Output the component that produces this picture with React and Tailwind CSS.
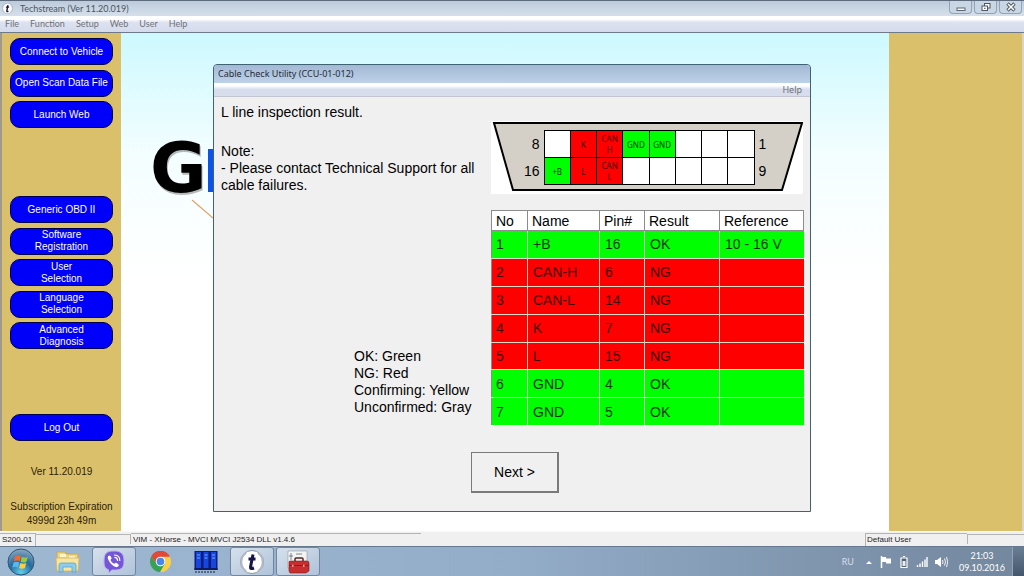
import React from "react";

const topActions = ["Connect to Vehicle", "Open Scan Data File", "Launch Web"];
const setupActions = [
  ["Generic OBD II"],
  ["Software", "Registration"],
  ["User", "Selection"],
  ["Language", "Selection"],
  ["Advanced", "Diagnosis"],
];

const pins = [
  { color: "bg-white" },
  { label: ["K"], color: "bg-[#ff0000]" },
  { label: ["CAN", "H"], color: "bg-[#ff0000]" },
  { label: ["GND"], color: "bg-[#00ff00]" },
  { label: ["GND"], color: "bg-[#00ff00]" },
  { color: "bg-white" },
  { color: "bg-white" },
  { color: "bg-white" },
  { label: ["+B"], color: "bg-[#00ff00]" },
  { label: ["L"], color: "bg-[#ff0000]" },
  { label: ["CAN", "L"], color: "bg-[#ff0000]" },
  { color: "bg-white" },
  { color: "bg-white" },
  { color: "bg-white" },
  { color: "bg-white" },
  { color: "bg-white" },
];

const results = [
  { no: 1, name: "+B", pin: 16, result: "OK", reference: "10 - 16 V" },
  { no: 2, name: "CAN-H", pin: 6, result: "NG" },
  { no: 3, name: "CAN-L", pin: 14, result: "NG" },
  { no: 4, name: "K", pin: 7, result: "NG" },
  { no: 5, name: "L", pin: 15, result: "NG" },
  { no: 6, name: "GND", pin: 4, result: "OK" },
  { no: 7, name: "GND", pin: 5, result: "OK" },
];

function TechstreamIcon({ className }) {
  return (
    <svg viewBox="0 0 24 24" className={className} aria-hidden="true">
      <circle cx="12" cy="12" r="11.5" fill="#fff" stroke="#8793a5" strokeWidth="1" />
      <path d="M6 3a11 11 0 0 0 0 18M18 3a11 11 0 0 1 0 18" fill="none" stroke="#b4bac6" strokeWidth="2" />
      <path d="M13 4.500 10.500 17q-.4 2.500 3.500 1M8.500 9h7" fill="none" stroke="#15154a" strokeWidth="3" />
    </svg>
  );
}

function TitleBar() {
  return (
    <header className="flex h-4 items-center justify-between border-t border-[#5d6b7c] bg-linear-to-b from-[#bccbdb] to-[#d5e0eb] pl-[2px]">
      <div className="flex items-center gap-[7px]">
        <TechstreamIcon className="size-[11px]" />
        <h1 className="text-[9px] leading-3 text-[#4b545f]">Techstream (Ver 11.20.019)</h1>
      </div>
      <div className="flex gap-[2px] self-start pr-[2px]">
        <button type="button" aria-label="Minimize" className="flex h-[13px] w-[23px] items-center justify-center rounded-b-sm border border-t-0 border-[#94a3b5] bg-[#c9d6e3]">
          <svg viewBox="0 0 10 10" className="size-[10px]">
            <rect x="1" y="6" width="8" height="2.500" fill="#fff" stroke="#5d6774" />
          </svg>
        </button>
        <button type="button" aria-label="Restore" className="flex h-[13px] w-[23px] items-center justify-center rounded-b-sm border border-t-0 border-[#94a3b5] bg-[#c9d6e3]">
          <svg viewBox="0 0 10 10" className="size-[10px]">
            <rect x="3.500" y="1.500" width="5.500" height="4.500" fill="#fff" stroke="#4d5764" />
            <rect x="1" y="4" width="5.500" height="4.500" fill="#fff" stroke="#4d5764" />
            <path d="M3 6.300h1.600" stroke="#4d5764" />
          </svg>
        </button>
        <button type="button" aria-label="Close" className="flex h-[13px] w-[23px] items-center justify-center rounded-b-sm border border-t-0 border-[#94a3b5] bg-[#c9d6e3]">
          <svg viewBox="0 0 10 10" className="size-[10px]">
            <path d="m1.500 1.500 7 7m0-7-7 7" stroke="#4d5764" strokeWidth="3.400" />
            <path d="m2 2 6 6m0-6-6 6" stroke="#fff" strokeWidth="1.500" />
          </svg>
        </button>
      </div>
    </header>
  );
}

function MenuBar() {
  return (
    <nav className="flex h-[17px] items-center gap-[11px] border-b border-[#6f7a88] bg-linear-to-b from-white from-20% via-[#dde2f0] via-40% to-[#d5dbec] pl-[5px] text-[9px] leading-3 text-[#6f7278]">
      {["File", "Function", "Setup", "Web", "User", "Help"].map((item) => (
        <button key={item} type="button">
          {item}
        </button>
      ))}
    </nav>
  );
}

function SideButton({ lines }) {
  return (
    <button
      type="button"
      className="flex h-[27px] w-full flex-col items-center justify-center rounded-[10px] border border-[#000050] bg-[#0000fa] text-[10px] leading-3 whitespace-nowrap text-white"
    >
      {lines.map((line) => (
        <span key={line}>{line}</span>
      ))}
    </button>
  );
}

function Sidebar() {
  return (
    <aside className="flex w-[121px] shrink-0 flex-col border-l-2 border-[#a09a8c] bg-[#dbc06c] pt-[5px] pr-2 pl-2 font-['Liberation_Sans',Arial,sans-serif]">
      <div className="flex h-[90px] flex-col justify-between">
        {topActions.map((label) => (
          <SideButton key={label} lines={[label]} />
        ))}
      </div>
      <div className="mt-[68px] flex h-[153px] flex-col justify-between">
        {setupActions.map((lines) => (
          <SideButton key={lines.join(" ")} lines={lines} />
        ))}
      </div>
      <div className="mt-[65px]">
        <SideButton lines={["Log Out"]} />
      </div>
      <div className="mt-6 text-center text-[10px] leading-[14px] whitespace-nowrap text-[#2b2005]">
        <p>Ver 11.20.019</p>
        <p className="mt-[21px]">Subscription Expiration</p>
        <p>4999d 23h 49m</p>
      </div>
    </aside>
  );
}

function Backdrop() {
  return (
    <div className="flex-1 bg-linear-to-b from-[#ccf9ff] via-[#f4feff] via-25% to-white to-50%">
      <svg viewBox="0 0 92 200" className="h-[200px] w-[92px]" aria-hidden="true">
        <text x="30" y="161" fontFamily="DejaVu Sans" fontWeight="bold" fontSize="69" fill="#777" opacity="0.5">
          G
        </text>
        <text x="29" y="159" fontFamily="DejaVu Sans" fontWeight="bold" fontSize="69" fill="#000">
          G
        </text>
        <rect x="87" y="116" width="5" height="43" fill="#0a54ee" />
        <path d="m71 167 21 18" stroke="#e0a468" strokeWidth="1.200" />
      </svg>
    </div>
  );
}

function Connector() {
  return (
    <figure className="relative flex h-[73px] items-center justify-center gap-1 bg-white text-[14px] leading-[27px]">
      <svg viewBox="0 0 312 73" className="absolute inset-0 size-full" preserveAspectRatio="none" aria-hidden="true">
        <path d="M3 2h308L291 69H22Z" fill="#d4d0c8" stroke="#000" strokeWidth="2" />
      </svg>
      <div className="relative w-5 text-right">
        <p>8</p>
        <p>16</p>
      </div>
      <div className="relative grid w-[211px] grid-cols-8 gap-px border border-black bg-black">
        {pins.map((pin, i) => (
          <div
            key={i}
            className={`flex h-[26px] flex-col items-center justify-center font-['Noto_Sans',sans-serif] text-[8px] leading-[11px] ${pin.color} ${pin.color === "bg-[#00ff00]" ? "text-[#043804]" : "text-[#400000]"}`}
          >
            {pin.label?.map((line) => (
              <span key={line}>{line}</span>
            ))}
          </div>
        ))}
      </div>
      <div className="relative w-4">
        <p>1</p>
        <p>9</p>
      </div>
    </figure>
  );
}

function ResultTable() {
  return (
    <table className="h-[215px] w-full table-fixed border-collapse border-l border-[#8c8c8c] text-left text-[14px] leading-4">
      <colgroup>
        <col className="w-[36px]" />
        <col className="w-[72px]" />
        <col className="w-[45px]" />
        <col className="w-[75px]" />
        <col className="w-[84px]" />
      </colgroup>
      <thead>
        <tr className="h-[20px] bg-white">
          {["No", "Name", "Pin#", "Result", "Reference"].map((head) => (
            <th key={head} scope="col" className="border border-[#8c8c8c] px-1 font-normal">
              {head}
            </th>
          ))}
        </tr>
      </thead>
      <tbody>
        {results.map((row) => (
          <tr key={row.no} className={row.result === "OK" ? "bg-[#00ff00] text-[#043804]" : "bg-[#ff0000] text-[#3c0000]"}>
            <td className="border-t border-r border-[#d9d9c8] px-1">{row.no}</td>
            <td className="border-t border-r border-[#d9d9c8] px-[5px]">{row.name}</td>
            <td className="border-t border-r border-[#d9d9c8] px-[5px]">{row.pin}</td>
            <td className="border-t border-r border-[#d9d9c8] px-[5px]">{row.result}</td>
            <td className="border-t border-[#d9d9c8] px-[5px]">{row.reference}</td>
          </tr>
        ))}
      </tbody>
    </table>
  );
}

function CableCheckDialog() {
  return (
    <section
      role="dialog"
      aria-labelledby="dialog-title"
      className="absolute inset-x-0 top-[31px] mx-auto w-[598px] rounded-t-[4px] border border-[#3f6373] bg-[#f0f0f0] font-['Liberation_Sans',Arial,sans-serif] text-black"
    >
      <div className="flex h-[18px] items-center rounded-t-[3px] bg-linear-to-b from-[#a3b9d3] to-[#bdd1e9] pl-1 font-['Noto_Sans',sans-serif]">
        <h2 id="dialog-title" className="text-[9px] leading-3 text-[#1f2c3c]">
          Cable Check Utility (CCU-01-012)
        </h2>
      </div>
      <div className="flex h-[14px] items-center justify-end border-b border-[#c3c6d0] bg-linear-to-b from-white from-20% to-[#d8ddee] to-50% pr-2 font-['Noto_Sans',sans-serif] text-[9px] leading-3 text-[#6f7278]">
        <button type="button">Help</button>
      </div>
      <div className="flex justify-between pt-[7px] pr-[7px] pl-[7px]">
        <div className="flex flex-col text-[14px] leading-[17px] whitespace-nowrap">
          <p>L line inspection result.</p>
          <p className="mt-[22px]">Note:</p>
          <p>
            - Please contact Technical Support for all
            <br />
            cable failures.
          </p>
          <ul className="mt-[154px] pl-[133px]">
            <li>OK: Green</li>
            <li>NG: Red</li>
            <li>Confirming: Yellow</li>
            <li>Unconfirmed: Gray</li>
          </ul>
        </div>
        <div className="flex w-[312px] flex-col gap-4 pt-[17px]">
          <Connector />
          <ResultTable />
        </div>
      </div>
      <div className="flex pt-[27px] pb-[18px] pl-[257px]">
        <button
          type="button"
          className="h-[41px] w-[88px] border border-r-2 border-b-2 border-[#7a7a7a] bg-[#f0f0f0] text-[14px] leading-4"
        >
          Next &gt;
        </button>
      </div>
    </section>
  );
}

function StatusBar() {
  return (
    <footer className="flex h-[15px] items-center border-t border-[#f8f8f8] bg-[#f0f0f0] py-[2px] font-['Liberation_Sans',Arial,sans-serif] text-[8px] leading-3 whitespace-nowrap text-[#1c1c1c]">
      <p className="w-[36px] border-t border-r border-[#b4b4b4] pl-[2px]">S200-01</p>
      <p className="h-full w-[95px] border-t border-r border-[#b4b4b4]"></p>
      <p className="w-[290px] border-t border-[#b4b4b4] pl-[2px]">VIM - XHorse - MVCI MVCI J2534 DLL v1.4.6</p>
      <p className="ml-auto w-[102px] border-t border-l border-[#b4b4b4] pl-px">Default User</p>
      <p className="h-full w-[57px] border-t border-l border-[#b4b4b4]"></p>
    </footer>
  );
}

function WindowsLogo() {
  return (
    <svg viewBox="0 0 28 28" className="size-[28px]">
      <defs>
        <radialGradient id="orb" cx="50%" cy="90%" r="90%">
          <stop offset="0" stopColor="#5fd0ee" />
          <stop offset="0.5" stopColor="#256a9d" />
          <stop offset="1" stopColor="#8fa9c0" />
        </radialGradient>
      </defs>
      <circle cx="14" cy="14" r="13" fill="url(#orb)" stroke="#2c5577" />
      <path d="M8 8.500c2-1.400 4-1.200 5.800-.2l-1.200 5c-1.800-1-3.800-1-5.800.1Z" fill="#ee6a32" />
      <path d="M14.800 8.800c2 1 4 1 6-.1l-1.300 5c-2 1.200-4 1-5.900 0Z" fill="#9aca3c" />
      <path d="M6.500 14.500c2-1.200 4-1.100 5.800-.1l-1.200 5c-1.800-1-3.800-1.100-5.800.1Z" fill="#58b7ec" />
      <path d="M13.300 15c2 1 4 1.100 5.900 0l-1.300 5c-2 1.100-4 .9-5.800-.1Z" fill="#fccd3c" />
    </svg>
  );
}

function ExplorerIcon() {
  return (
    <svg viewBox="0 0 26 24" className="h-[24px] w-[26px]">
      <path d="M2 2h8l1 2h12v17H2Z" fill="#eed486" stroke="#cda950" />
      <path d="M5 4h6v3H5Zm9 2h6v3h-6Z" fill="#fff6c8" />
      <path d="M1 8h23l-1 13H2Z" fill="#f8e59e" stroke="#d6b860" strokeWidth="0.800" />
      <path d="M4 22v-7q0-2 2-2h13q2 0 2 2v7h-4v-5H8v5Z" fill="#8ecbed" stroke="#5ca6d1" strokeWidth="0.800" />
    </svg>
  );
}

function ViberIcon() {
  return (
    <svg viewBox="0 0 24 24" className="size-[24px]">
      <path d="M12 1C5 1 2 3 2 11c0 5 1 7.500 4.500 8.700V23l3.500-3c9 .5 12-1.500 12-9S19 1 12 1Z" fill="#7357d8" stroke="#bdb1f0" />
      <path d="M7.200 5.500c-2 1-1.800 2.500-.5 5 1.700 3.300 4 5.300 7 6.500 1.500.5 2.600-.3 3.200-1.700.2-.7-2.200-2.600-3-2.600-.7 0-1 1.200-1.800 1-1.700-.6-3-2-3.500-3.600-.2-.8 1-1 1-1.800 0-.9-1.500-2.900-2.400-2.800Z" fill="#fff" />
      <path d="M12.500 5c3.300.2 5.300 2.300 5.300 5.500M12.800 7.400c1.800.2 2.700 1.200 2.800 3" fill="none" stroke="#fff" strokeWidth="1.200" strokeLinecap="round" />
    </svg>
  );
}

function ChromeIcon() {
  return (
    <svg viewBox="0 0 24 24" className="size-[23px]">
      <path d="M12 12 2.470 6.500A11 11 0 0 1 21.530 6.500Z" fill="#df4a3a" />
      <path d="M12 1A11 11 0 0 0 2.470 6.500L7.670 14.500 12 7h9.800A11 11 0 0 0 12 1Z" fill="#df4a3a" />
      <path d="M21.800 7H12l4.330 7.500L11.500 23A11 11 0 0 0 21.800 7Z" fill="#fbd046" />
      <path d="M2.470 6.500A11 11 0 0 0 11.500 23l4.830-8.500H7.670Z" fill="#35a353" />
      <circle cx="12" cy="12" r="5" fill="#fff" />
      <circle cx="12" cy="12" r="4" fill="#4788ed" />
    </svg>
  );
}

function ServerIcon() {
  return (
    <svg viewBox="0 0 24 24" className="size-[24px]">
      <rect x="0.500" y="1" width="23" height="19" fill="#0a1d7d" />
      <path d="M2 2h5v16H2Zm7.500 0h5v16h-5ZM17 2h5v16h-5Z" fill="#1746df" />
      <path d="M3 5h3m-3 3h3m4.500-3h3m-3 3h3m4.500-3h3m-3 3h3" stroke="#6da9ff" />
      <path d="M0 19h24M2 21v2m3-2v2m3-2v2m3-2v2m3-2v2m3-2v2m3-2v2" stroke="#101d46" />
    </svg>
  );
}

function ToolboxIcon() {
  return (
    <svg viewBox="0 0 24 24" className="size-[24px]">
      <path d="M2 1h19v17H2Z" fill="#f4f4f4" stroke="#92979f" strokeWidth="0.600" />
      <path d="M5 3v7M3 6h4M10 4h6" stroke="#606872" strokeWidth="0.800" />
      <path d="M9 12V9q0-1 1-1h6q1 0 1 1v3" fill="none" stroke="#562323" strokeWidth="1.500" />
      <path d="M3 12q0-1 1-1h17q2 0 2 2v8L20 23H4l-1-2Z" fill="#c72e2d" stroke="#7c1c1c" strokeWidth="0.600" />
      <path d="M3 15.500h20" stroke="#761d1d" strokeWidth="0.800" />
      <path d="M6 14.800h1.500v2H6Zm11 0h1.500v2H17Z" fill="#e5b3b3" />
    </svg>
  );
}

const apps = [
  { name: "Explorer", icon: <ExplorerIcon /> },
  { name: "Viber", icon: <ViberIcon />, open: true },
  { name: "Chrome", icon: <ChromeIcon /> },
  { name: "Servers", icon: <ServerIcon /> },
  { name: "Techstream", icon: <TechstreamIcon className="size-[24px]" />, open: true },
  { name: "Cable Check", icon: <ToolboxIcon />, open: true },
];

function Taskbar() {
  return (
    <div className="flex h-[30px] items-stretch justify-between border-t border-[#66788d] bg-linear-to-r from-[#9fb8d2] via-[#93acc8] via-50% to-[#73879e]">
      <div className="flex gap-[2px]">
        <button type="button" aria-label="Start" className="flex w-11 items-center justify-center pr-[2px]">
          <WindowsLogo />
        </button>
        {apps.map((app) => (
          <button
            key={app.name}
            type="button"
            aria-label={app.name}
            className={`flex w-11 items-center justify-center rounded-[3px] ${app.open ? "border border-[#71869f] bg-linear-to-br from-[#d5e0ec] to-[#b0c3d9]" : ""}`}
          >
            {app.icon}
          </button>
        ))}
      </div>
      <div className="flex items-center gap-[7px] text-[9px] leading-3 text-white">
        <span className="pr-1 text-[#d4dde7]">RU</span>
        <svg viewBox="0 0 8 12" className="h-[12px] w-[8px]">
          <path d="m1 8 3-3 3 3Z" fill="#fff" />
        </svg>
        <svg viewBox="0 0 12 14" className="h-[14px] w-[12px]">
          <path d="M1.500 1v12" stroke="#fff" strokeWidth="1.500" />
          <path d="M2 2h4v1.500h5v5H6V7H2Z" fill="#fff" />
        </svg>
        <svg viewBox="0 0 10 14" className="h-[14px] w-[10px]">
          <path d="M2 3h6v9.500H2ZM4 1.500h2" fill="#536579" stroke="#fff" strokeWidth="1.200" />
          <path d="M3.500 6h3v5h-3Z" fill="#e8eef4" />
        </svg>
        <svg viewBox="0 0 12 12" className="h-[12px] w-[12px]">
          <path d="M1.500 11V9m2.500 2V7.500M6.500 11V5.500M9 11V3.500M11 11V1" stroke="#fff" strokeWidth="1.400" />
        </svg>
        <svg viewBox="0 0 13 12" className="h-[12px] w-[13px]">
          <path d="M0 4h2l4-3v10L2 8H0Z" fill="#fff" />
          <path d="M7.500 4q1 2 0 4m2-5.500q2 3.500 0 7m2-8.500q2.500 5 0 10" fill="none" stroke="#fff" strokeWidth="0.900" />
        </svg>
        <div className="ml-1 text-center">
          <p>21:03</p>
          <p>09.10.2016</p>
        </div>
        <button type="button" aria-label="Show desktop" className="h-full w-[12px] border-l border-[#93a3b4] bg-linear-to-b from-[#6c7e93] to-[#43566b]" />
      </div>
    </div>
  );
}

export default function App() {
  return (
    <div className="flex min-h-screen flex-col bg-white font-[Lato,'Noto_Sans',sans-serif]">
      <TitleBar />
      <MenuBar />
      <main className="relative flex flex-1">
        <Sidebar />
        <Backdrop />
        <aside className="w-[135px] shrink-0 border-r-2 border-[#d8d4c8] bg-[#dbc06c]"></aside>
        <CableCheckDialog />
      </main>
      <StatusBar />
      <Taskbar />
    </div>
  );
}
